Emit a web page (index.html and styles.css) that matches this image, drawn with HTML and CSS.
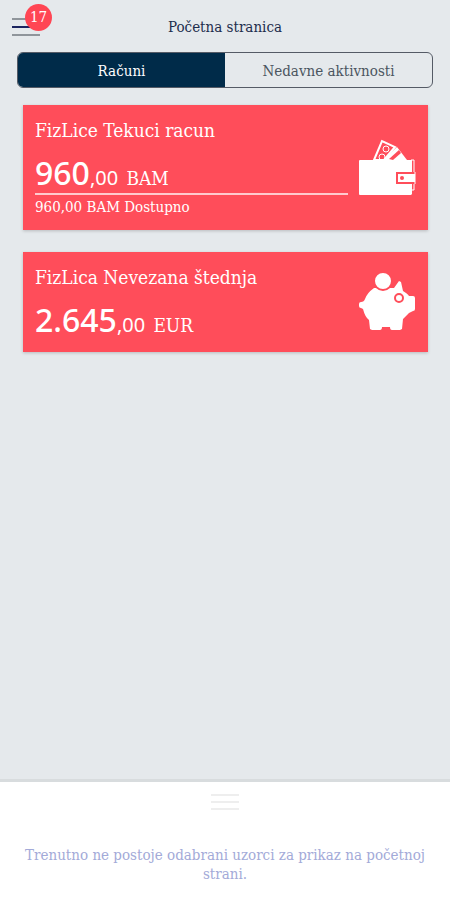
FILE: index.html
```html
<!DOCTYPE html>
<html lang="bs">
<head>
  <meta charset="UTF-8" />
  <meta name="viewport" content="width=device-width, initial-scale=1.0"/>
  <title>Početna stranica</title>
  <link rel="stylesheet" href="styles.css">
</head>
<body>
  <header>
    <button class="menu" type="button" aria-label="Meni">
      <span class="line"></span>
      <span class="line dark"></span>
      <span class="line"></span>
      <span class="badge">17</span>
    </button>
    <h1>Početna stranica</h1>
  </header>

  <nav class="tabs">
    <button type="button" class="active">Računi</button>
    <button type="button">Nedavne aktivnosti</button>
  </nav>

  <main>
    <section class="card">
      <div class="info">
        <h2>FizLice Tekuci racun</h2>
        <p class="amount"><span class="whole">960</span>,00 <span class="currency">BAM</span></p>
        <p class="available">960,00 BAM Dostupno</p>
      </div>
      <svg class="icon" viewBox="0 0 58 60" aria-hidden="true">
        <path d="M16 22 24 3 37 9 26 22Z" fill="#ff4d5a" stroke="#fff" stroke-width="2"/>
        <circle cx="28" cy="11" r="3" fill="none" stroke="#fff"/>
        <circle cx="24" cy="19" r="3" fill="none" stroke="#fff"/>
        <path d="M25 22 39 9 49 22Z" fill="#fff"/>
        <path d="M31 21 41 12l2 3-8 7Z" fill="#ff4d5a"/>
        <path d="M2 22h52v34l-1 1H2q-1 0-1-1V23q0-1 1-1Z" fill="#fff"/>
        <path d="M53 22h3v30h-2" fill="none" stroke="#fff"/>
        <path d="M57 35H39v10h18" fill="#fff" stroke="#ff4d5a" stroke-width="2"/>
        <path d="M57 34v12" stroke="#fff"/>
        <circle cx="44" cy="40" r="2" fill="#ff4d5a"/>
      </svg>
    </section>

    <section class="card">
      <div class="info">
        <h2>FizLica Nevezana štednja</h2>
        <p class="amount"><span class="whole">2.645</span>,00 <span class="currency">EUR</span></p>
      </div>
      <svg class="icon" viewBox="0 0 58 60" aria-hidden="true">
        <path d="M3 30q3 0 4-3 2-6 9-11h20l5-7 2 1 2 9q5 3 6 5h4q2 0 2 2v11q0 2-2 2l-4 2-6 6-1 10-2 1h-8q-2 0-2-3h-8q0 3-2 3h-8l-2-1-1-9Q7 45 5 37l-2-1q-2 0-2-2v-2q0-2 2-2Z" fill="#fff"/>
        <circle cx="25" cy="9" r="9" fill="#fff" stroke="#ff4d5a" stroke-width="2"/>
        <circle cx="41" cy="26" r="4" fill="#fff" stroke="#ff4d5a" stroke-width="2"/>
      </svg>
    </section>
  </main>

  <footer>
    <button class="handle" type="button" aria-label="Uzorci">
      <span></span>
      <span></span>
      <span></span>
    </button>
    <p>Trenutno ne postoje odabrani uzorci za prikaz na početnoj strani.</p>
  </footer>
</body>
</html>
```
FILE: styles.css
```css
* {
  box-sizing: border-box;
}
body {
  margin: 0;
  min-height: 100vh;
  display: flex;
  flex-direction: column;
  font-family: "DejaVu Serif Condensed", "DejaVu Serif", serif;
  font-size: 15px;
  background-color: #e5e9ec;
  color: #1d2d4d;
}
h1, h2, p {
  margin: 0;
  font-weight: normal;
}
button {
  font: inherit;
  padding: 0;
  border: none;
  background: none;
  color: inherit;
  cursor: pointer;
}
header {
  display: grid;
  grid-template-columns: 40px 1fr 40px;
  align-items: center;
  height: 52px;
  padding: 2px 12px 0;
}
h1 {
  font-size: 15px;
  text-align: center;
}
.menu {
  position: relative;
  display: flex;
  flex-direction: column;
  gap: 6px;
  width: 28px;
}
.line {
  height: 2px;
  background-color: #8f959b;
}
.line.dark {
  background-color: #1c2560;
}
.badge {
  position: absolute;
  top: -14px;
  left: 13px;
  width: 27px;
  height: 27px;
  border-radius: 50%;
  line-height: 27px;
  background-color: #ff4654;
  color: white;
}
.tabs {
  display: flex;
  height: 36px;
  margin: 0 17px;
  border: 1px solid #555b66;
  border-radius: 6px;
  overflow: hidden;
}
.tabs button {
  flex: 1;
  padding-top: 1px;
  color: #4b5560;
}
.tabs .active {
  background-color: #002b49;
  color: white;
}
main {
  flex: 1;
  display: flex;
  flex-direction: column;
  gap: 22px;
  padding: 17px 22px 24px 23px;
}
.card {
  display: flex;
  align-items: center;
  gap: 10px;
  padding: 12px;
  background-color: #ff4d5a;
  color: white;
  box-shadow: 0 1px 3px rgba(0,0,0,0.2);
}
.info {
  flex: 1;
}
h2 {
  font-size: 19px;
  line-height: 27px;
}
.amount {
  margin-top: 8px;
  font-size: 20px;
  line-height: 20px;
  font-family: "Noto Sans", sans-serif;
}
.whole {
  font-size: 32px;
  font-weight: 500;
  line-height: 41px;
}
.currency {
  margin-left: 3px;
  font-size: 19px;
  font-family: "DejaVu Serif Condensed", "DejaVu Serif", serif;
}
.available {
  padding-top: 1px;
  border-top: 2px solid rgba(255,255,255,0.7);
  line-height: 22px;
}
.icon {
  width: 58px;
  height: 60px;
}
footer {
  border-top: 3px solid #d8dcde;
  background-color: white;
  padding: 12px 20px 16px;
  text-align: center;
  color: #a3aad8;
}
.handle {
  display: flex;
  flex-direction: column;
  gap: 5px;
  width: 28px;
  margin: 0 auto 36px;
}
.handle span {
  height: 2px;
  background-color: #eeeeee;
}
footer p {
  line-height: 19px;
}
```
